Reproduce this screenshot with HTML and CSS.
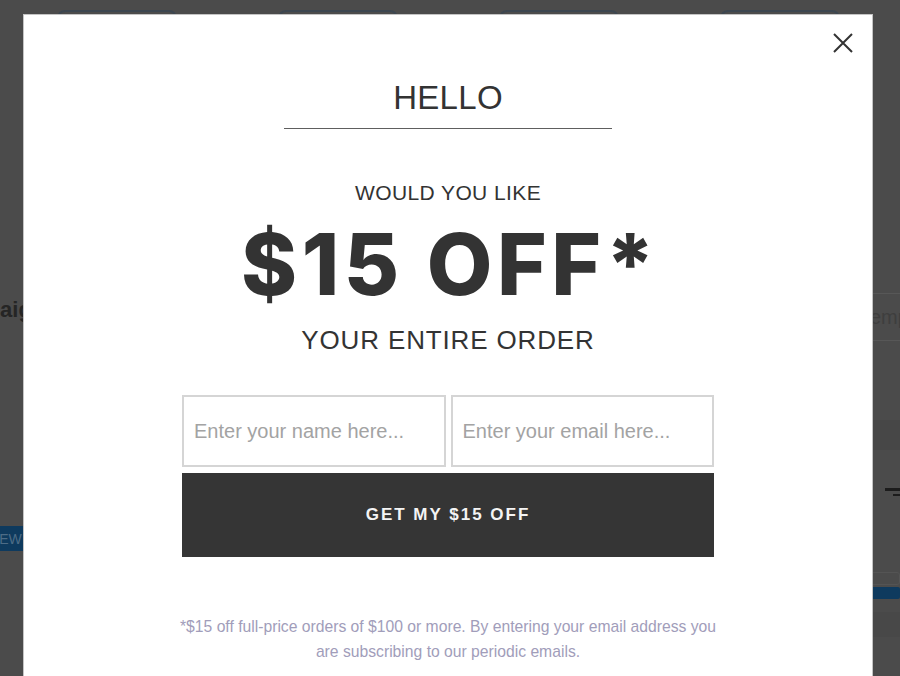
FILE: index.html
```html
<!DOCTYPE html>
<html>
  <head>
    <title>Get $15 Off</title>
    <link rel="stylesheet" href="styles.css">
  </head>
  <body>
    <div class="page">
      <div class="tabs">
        <span class="tab"></span>
        <span class="tab"></span>
        <span class="tab"></span>
        <span class="tab"></span>
      </div>
      <div class="content">
        <div class="left">
          <h2 class="title">Campaigns</h2>
          <button class="view-btn">VIEW</button>
        </div>
        <div class="right">
          <div class="search">Templates</div>
          <div class="band"></div>
          <div class="arrows">
            <span class="bar-long"></span>
            <span class="bar-short"></span>
          </div>
          <div class="mini-input"></div>
          <div class="mini-btn"></div>
          <div class="band band-low"></div>
        </div>
      </div>
    </div>

    <div class="modal">
      <button class="close" aria-label="Close">
        <svg width="20" height="20" viewBox="0 0 20 20">
          <path d="M1 1 L19 19 M19 1 L1 19" stroke="#333" stroke-width="2" fill="none" />
        </svg>
      </button>
      <div class="hello">HELLO</div>
      <p class="lead">WOULD YOU LIKE</p>
      <p class="offer">$15 OFF*</p>
      <p class="sub">YOUR ENTIRE ORDER</p>
      <form class="signup">
        <div class="fields">
          <input type="text" placeholder="Enter your name here..." />
          <input type="email" placeholder="Enter your email here..." />
        </div>
        <button type="button" class="submit">GET MY $15 OFF</button>
      </form>
      <p class="fine">
        *$15 off full-price orders of $100 or more. By entering your email address you<br>
        are subscribing to our periodic emails.
      </p>
    </div>
  </body>
</html>
```

FILE: styles.css
```css
body {
  margin: 0;
  font-family: "Liberation Sans", Arial, sans-serif;
  background: #4b4b4b;
}

/* dimmed page behind the popup */
.page {
  height: 676px;
  overflow: hidden;
  background: #4b4b4b;
}
.tabs {
  display: flex;
  gap: 101px;
  padding: 10px 0 0 57px;
}
.tab {
  width: 120px;
  height: 30px;
  box-sizing: border-box;
  border: 2px solid #3c4650;
  border-radius: 8px;
}
.content {
  display: flex;
  justify-content: space-between;
  align-items: flex-start;
}
.left {
  display: flex;
  flex-direction: column;
  align-items: flex-start;
}
.title {
  margin: 256px 0 0 -61px;
  font-size: 22px;
  line-height: 28px;
  font-weight: bold;
  color: #252525;
}
.view-btn {
  margin: 202px 0 0 -24px;
  height: 25px;
  padding: 0 10px;
  border: none;
  background: #0e3a5e;
  color: #4d6c86;
  font-family: "Liberation Sans", Arial, sans-serif;
  font-size: 14px;
}
.right {
  width: 42px;
  padding-top: 253px;
}
.search {
  height: 46px;
  border-top: 1px solid #575757;
  border-bottom: 1px solid #575757;
  font-size: 20px;
  line-height: 46px;
  color: #3e3e3e;
  padding-left: 2px;
  white-space: nowrap;
  overflow: hidden;
}
.band {
  height: 30px;
  margin-top: 79px;
  background: #474747;
}
.arrows {
  display: flex;
  flex-direction: column;
  align-items: flex-end;
  margin-top: 38px;
  gap: 3px;
}
.bar-long {
  width: 15px;
  height: 3px;
  background: #1c1c1c;
}
.bar-short {
  width: 7px;
  height: 2px;
  background: #1c1c1c;
}
.mini-input {
  height: 11px;
  margin: 76px 0 0 9px;
  border: 1px solid #545454;
  border-radius: 3px;
}
.mini-btn {
  height: 12px;
  margin: 2px 0 0 9px;
  background: #0e3a5e;
  border-radius: 2px;
}
.band-low {
  height: 25px;
  margin-top: 13px;
  background: #484848;
}

/* popup */
.modal {
  position: absolute;
  top: 14px;
  left: 23px;
  width: 850px;
  height: 680px;
  box-sizing: border-box;
  border: 1px solid #c4c4c4;
  background: #fff;
  padding-top: 63px;
  display: flex;
  flex-direction: column;
  align-items: center;
  color: #333;
}
.close {
  position: absolute;
  top: 18px;
  right: 19px;
  width: 20px;
  height: 20px;
  padding: 0;
  border: none;
  background: none;
  cursor: pointer;
}
.close svg {
  display: block;
}
.hello {
  width: 328px;
  padding-bottom: 10px;
  border-bottom: 1px solid #5e5e5e;
  text-align: center;
  font-size: 33px;
  line-height: 40px;
  letter-spacing: 0.3px;
}
.lead {
  margin: 52px 0 0;
  font-size: 21px;
  line-height: 24px;
  letter-spacing: 0.4px;
}
.offer {
  margin: 17px 0 0;
  padding-left: 4.5px;
  font-family: Inter, "Liberation Sans", sans-serif;
  font-weight: 800;
  font-size: 85px;
  line-height: 85px;
  letter-spacing: 4.5px;
}
.sub {
  margin: 18px 0 0;
  font-size: 26px;
  line-height: 30px;
  letter-spacing: 0.85px;
}
.signup {
  width: 532px;
  margin-top: 40px;
}
.fields {
  display: grid;
  grid-template-columns: 1fr 1fr;
  gap: 5px;
}
.fields input {
  width: 100%;
  min-width: 0;
  height: 72px;
  box-sizing: border-box;
  padding: 0 10px;
  border: 2px solid #d5d5d5;
  font-family: "Liberation Sans", Arial, sans-serif;
  font-size: 20px;
  color: #333;
  outline: none;
}
.fields input::placeholder {
  color: #a3a3a3;
}
.submit {
  display: block;
  width: 100%;
  height: 84px;
  margin-top: 6px;
  border: none;
  background: #353535;
  color: #f4f4f4;
  font-family: "Liberation Sans", Arial, sans-serif;
  font-size: 17px;
  font-weight: bold;
  letter-spacing: 2px;
  cursor: pointer;
}
.fine {
  margin: 57px 0 0;
  text-align: center;
  font-size: 15.7px;
  line-height: 25px;
  color: #a19dba;
}
```
